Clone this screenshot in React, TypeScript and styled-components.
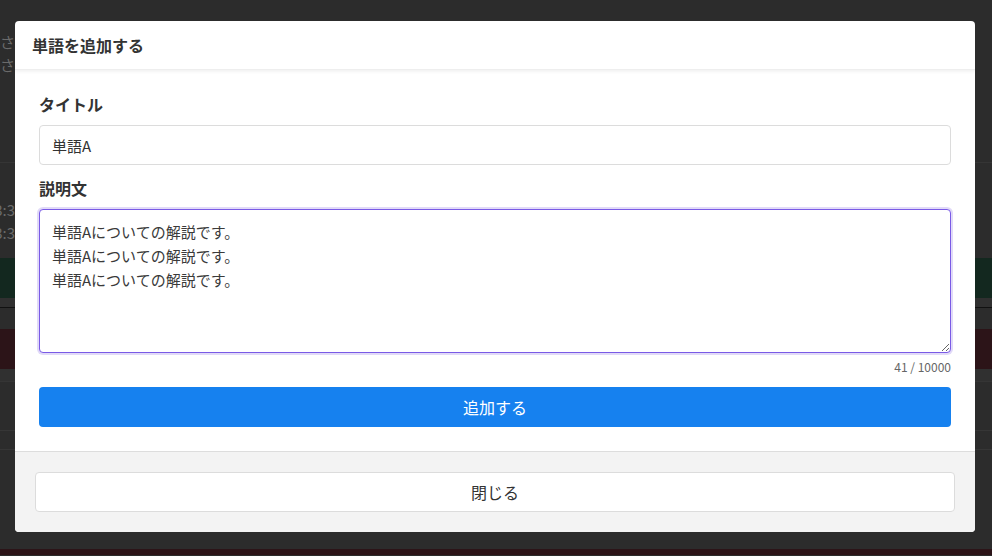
import React, { useEffect, useRef } from "react";
import styled, { createGlobalStyle } from "styled-components";

const Global = createGlobalStyle`
  html, body { margin: 0; padding: 0; }
  body {
    width: 992px;
    height: 556px;
    overflow: hidden;
    background: #2c2c2c;
    font-family: "Noto Sans CJK JP", "Noto Sans", sans-serif;
  }
  * { box-sizing: border-box; }
`;

/* ---------- background page (dimmed) ---------- */
const Page = styled.div`
  width: 992px;
  height: 556px;
  display: flex;
  flex-direction: column;
  background: #2c2c2c;
  overflow: hidden;
`;

const BgText = styled.div`
  width: 15px;
  overflow: hidden;
  color: #6a6a6a;
  font-size: 15px;
  line-height: 23px;
  white-space: nowrap;
  direction: rtl;
`;

const BgBlock = styled.div<{ $h: number; $bg?: string; $line?: string; $pt?: number }>`
  height: ${(p) => p.$h}px;
  flex: none;
  background: ${(p) => p.$bg || "transparent"};
  border-bottom: ${(p) => (p.$line ? `1px solid ${p.$line}` : "none")};
  padding-top: ${(p) => p.$pt || 0}px;
  display: flex;
  flex-direction: column;
  justify-content: ${(p) => (p.$pt ? "flex-start" : "center")};
`;

/* ---------- modal ---------- */
const Modal = styled.div`
  position: absolute;
  left: 15px;
  top: 21px;
  width: 960px;
  height: 511px;
  background: #fff;
  border-radius: 4px;
  display: flex;
  flex-direction: column;
  overflow: hidden;
`;

const Header = styled.div`
  height: 49px;
  flex: none;
  display: flex;
  align-items: center;
  padding: 0 17px;
  box-shadow: 0 1px 4px rgba(0, 0, 0, 0.08);
  border-bottom: 1px solid #eeeeee;
  position: relative;
  z-index: 1;
`;

const Title = styled.h2`
  margin: 0;
  font-size: 16px;
  font-weight: 700;
  color: #333;
`;

const Body = styled.div`
  flex: 1;
  padding: 22px 24px 24px;
  display: flex;
  flex-direction: column;
`;

const Label = styled.label<{ $top?: number }>`
  display: block;
  font-size: 16px;
  line-height: 24px;
  font-weight: 700;
  color: #333;
  margin-top: ${(p) => p.$top || 0}px;
  margin-bottom: 9px;
`;

const Input = styled.input`
  width: 100%;
  height: 40px;
  border: 1px solid #dcdcdc;
  border-radius: 4px;
  padding: 0 12px;
  font-family: inherit;
  font-size: 15px;
  color: #333;
  outline: none;
`;

const TextArea = styled.textarea`
  width: 100%;
  height: 144px;
  border: 1px solid #7a5ae6;
  border-radius: 4px;
  box-shadow: 0 0 0 2px #e1daf8;
  padding: 10px 12px;
  font-family: inherit;
  font-size: 15px;
  line-height: 24px;
  color: #3a3a3a;
  caret-color: #222;
  outline: none;
  resize: vertical;
  display: block;
`;

const Counter = styled.div`
  text-align: right;
  font-size: 12px;
  line-height: 14px;
  color: #666;
  margin: 7px 0 13px;
`;

const PrimaryButton = styled.button`
  width: 100%;
  height: 40px;
  border: none;
  border-radius: 4px;
  background: #1681ef;
  color: #fff;
  font-family: inherit;
  font-size: 16px;
`;

const Footer = styled.div`
  flex: none;
  height: 81px;
  background: #f3f3f3;
  border-top: 1px solid #dddddd;
  padding: 20px;
`;

const SecondaryButton = styled.button`
  width: 100%;
  height: 40px;
  background: #fff;
  border: 1px solid #dcdcdc;
  border-radius: 4px;
  color: #333;
  font-family: inherit;
  font-size: 16px;
`;

const text =
  "単語Aについての解説です。\n単語Aについての解説です。\n単語Aについての解説です。";

export default function App() {
  const ref = useRef<HTMLTextAreaElement>(null);
  useEffect(() => {
    const el = ref.current;
    if (el) {
      el.focus();
      el.setSelectionRange(el.value.length, el.value.length);
    }
  }, []);

  return (
    <>
      <Global />
      <Page>
        <BgBlock $h={28} />
        <BgBlock $h={50}>
          <BgText>明さ</BgText>
          <BgText>明さ</BgText>
        </BgBlock>
        <BgBlock $h={85} $line="#353535" />
        <BgBlock $h={30} />
        <BgBlock $h={65} $pt={5}>
          <BgText>13:3</BgText>
          <BgText>13:3</BgText>
        </BgBlock>
        <BgBlock $h={40} $bg="#13281f" />
        <BgBlock $h={10} $bg="#303030" $line="#111" />
        <BgBlock $h={21} />
        <BgBlock $h={40} $bg="#2c1418" />
        <BgBlock $h={13} $bg="#303030" $line="#353535" />
        <BgBlock $h={49} $line="#363636" />
        <BgBlock $h={19} $line="#363636" />
        <BgBlock $h={99} />
        <BgBlock $h={6} $bg="#2c1418" />
      </Page>
      <Modal>
        <Header>
          <Title>単語を追加する</Title>
        </Header>
        <Body>
          <Label>タイトル</Label>
          <Input defaultValue="単語A" />
          <Label $top={11}>説明文</Label>
          <TextArea ref={ref} defaultValue={text} />
          <Counter>41 / 10000</Counter>
          <PrimaryButton>追加する</PrimaryButton>
        </Body>
        <Footer>
          <SecondaryButton>閉じる</SecondaryButton>
        </Footer>
      </Modal>
    </>
  );
}
